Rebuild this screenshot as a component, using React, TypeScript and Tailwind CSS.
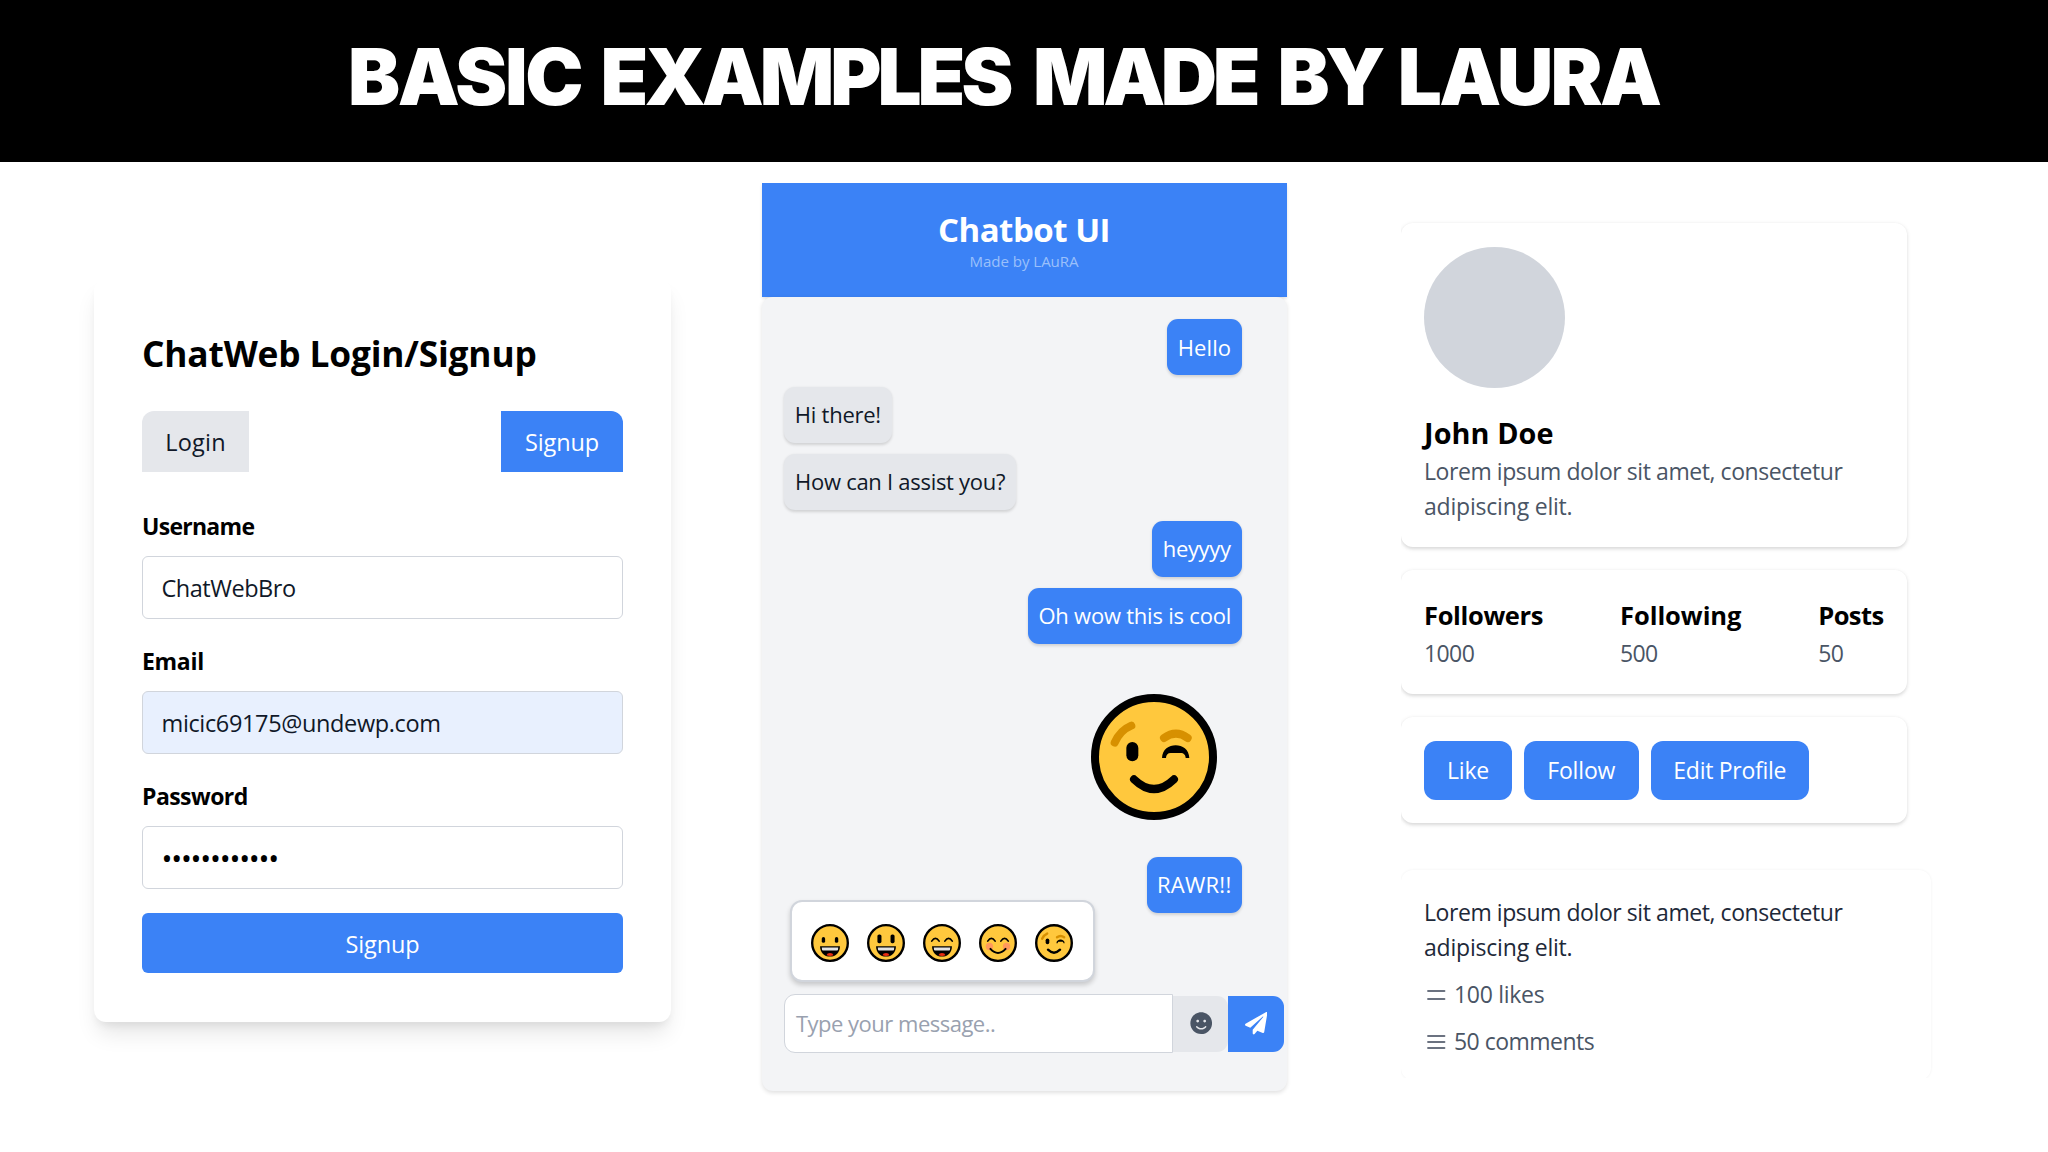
import type { ReactNode } from "react";
import { FaPaperPlane, FaSmile } from "react-icons/fa";

/* ---------- Emoji drawings ---------- */

function WinkEmoji({ className }: { className: string }) {
  return (
    <svg viewBox="32 42 378 378" className={className} fill="none" strokeLinecap="round">
      <circle cx="221" cy="231" r="177" fill="#ffc83d" stroke="#000" strokeWidth="24" />
      <path d="M103 188 Q119 151 153 137" stroke="#d79000" strokeWidth="24" />
      <path d="M251 174 Q287 148 322 174" stroke="#d79000" strokeWidth="24" />
      <rect x="138" y="186" width="36" height="58" rx="18" fill="#000" />
      <path
        d="M245 234 C246 208 266 196 286 196 C306 196 326 208 327 234 H316 C316 225 310 219 301 219 H271 C262 219 257 225 257 234 Z"
        fill="#000"
      />
      <path d="M161 298 Q221 356 281 298" stroke="#000" strokeWidth="24" />
    </svg>
  );
}

function Face({ children }: { children: ReactNode }) {
  return (
    <svg viewBox="0 0 113 113" className="size-[38px]" fill="none" strokeLinecap="round">
      <circle cx="56.5" cy="56.5" r="53" fill="#ffc83d" stroke="#000" strokeWidth="7" />
      {children}
    </svg>
  );
}

function OpenMouth() {
  return (
    <>
      <path d="M27 66 H86 C86 84 74 97 56.5 97 C39 97 27 84 27 66 Z" fill="#000" />
      <path d="M32 70 H81 Q81 79 78 79 H35 Q32 79 32 70 Z" fill="#e2e2e2" />
      <path d="M46 93 Q48 86 56.5 86 Q65 86 67 93 Q56.5 97 46 93 Z" fill="#e92c10" />
    </>
  );
}

function ArcEyes() {
  return (
    <>
      <path d="M26 51 Q37 34 48 51" stroke="#000" strokeWidth="5" />
      <path d="M65 51 Q76 34 87 51" stroke="#000" strokeWidth="5" />
    </>
  );
}

function EmojiPicker() {
  return (
    <div className="flex h-[82px] w-[305px] items-center justify-between rounded-[12px] border-2 border-gray-300 bg-white pr-[19.5px] pl-[19.5px] pt-[3px] shadow-[0_3px_5px_rgba(0,0,0,0.18)]">
      <Face>
        <rect x="32" y="39" width="10" height="17" rx="5" fill="#000" />
        <rect x="71" y="39" width="10" height="17" rx="5" fill="#000" />
        <OpenMouth />
      </Face>
      <Face>
        <rect x="31" y="31" width="12" height="26" rx="5" fill="#000" />
        <rect x="70" y="31" width="12" height="26" rx="5" fill="#000" />
        <OpenMouth />
      </Face>
      <Face>
        <ArcEyes />
        <OpenMouth />
      </Face>
      <Face>
        <circle cx="31" cy="67" r="11" fill="#ff8a65" opacity="0.75" />
        <circle cx="82" cy="67" r="11" fill="#ff8a65" opacity="0.75" />
        <ArcEyes />
        <path d="M34 74 Q56.5 98 79 74" stroke="#000" strokeWidth="6" />
      </Face>
      <WinkEmoji className="size-[38px]" />
    </div>
  );
}

/* ---------- Login / signup ---------- */

function Field({ label, tracking, children, tint }: { label: string; tracking: string; children: ReactNode; tint?: boolean }) {
  return (
    <div className="mb-6">
      <div className={"mb-3 text-[23px] font-bold leading-9 text-black " + tracking}>{label}</div>
      <div
        className={
          "flex h-[63px] items-center rounded-[6px] border-[1.5px] border-gray-300 pt-px pl-[18.5px] leading-9 text-gray-900 " +
          (tint ? "bg-[#e8f0fe]" : "bg-white")
        }
      >
        {children}
      </div>
    </div>
  );
}

function LoginCard() {
  return (
    <section className="mt-[117px] ml-[94px] h-[742.5px] w-[577px] shrink-0 rounded-[12px] bg-white p-12 text-[23.5px] shadow-[0_15px_22px_-4px_rgba(0,0,0,0.1),0_6px_9px_-3px_rgba(0,0,0,0.07)]">
      <h2 className="mb-[34px] pt-[2px] text-[35.3px] leading-[48px] font-bold tracking-[-0.17px] whitespace-nowrap text-black">
        ChatWeb Login/Signup
      </h2>
      <div className="mb-9 flex justify-between leading-9">
        <button className="h-[60.5px] w-[107px] rounded-tl-[12px] bg-gray-200 pt-[2px] tracking-[0.2px] text-gray-900">Login</button>
        <button className="h-[60.5px] w-[122px] rounded-tr-[12px] bg-[#3b82f6] pt-[2px] tracking-[-0.1px] text-white">Signup</button>
      </div>
      <Field label="Username" tracking="tracking-[-0.72px]">
        <span className="tracking-[-0.48px]">ChatWebBro</span>
      </Field>
      <Field label="Email" tracking="tracking-[-0.3px]" tint>
        <span className="tracking-[-0.36px]">micic69175@undewp.com</span>
      </Field>
      <Field label="Password" tracking="tracking-[-0.55px]">
        <span className="text-[29px] tracking-[-1.2px] text-black">••••••••••••</span>
      </Field>
      <button className="h-[60px] w-full rounded-[6px] bg-[#3b82f6] pt-[2px] leading-9 tracking-[-0.1px] text-white">Signup</button>
    </section>
  );
}

/* ---------- Chat ---------- */

function Bubble({ text, mine, size }: { text: string; mine?: boolean; size: string }) {
  return (
    <div
      className={
        "flex h-14 items-center justify-center rounded-[11px] whitespace-nowrap shadow-[0_1.5px_3px_rgba(0,0,0,0.14)] " +
        size +
        (mine ? " self-end bg-[#3b82f6] text-white" : " self-start bg-gray-200 text-gray-900")
      }
    >
      {text}
    </div>
  );
}

function ChatPanel() {
  return (
    <section className="mt-[21px] ml-[90.5px] flex w-[525px] shrink-0 flex-col text-[22px]">
      <header className="flex h-[114px] flex-col items-center bg-[#3b82f6] pt-[23.5px] shadow-[0_1.5px_3px_rgba(0,0,0,0.12)]">
        <h2 className="text-[33px] leading-[45px] font-bold tracking-[-0.5px] text-white">Chatbot UI</h2>
        <p className="-mt-[1.5px] text-[15.1px] leading-[22px] tracking-[-0.05px] text-[#9ac0fb]">Made by LAuRA</p>
      </header>
      <div className="relative h-[794px] rounded-[11px] bg-gray-100 pt-[22.4px] pr-[44.8px] pl-[22.4px] shadow-[0_1.5px_4px_rgba(0,0,0,0.12)]">
        <div className="flex flex-col gap-[11.2px] leading-[33.6px]">
          <Bubble mine text="Hello" size="w-[74.5px] tracking-[0.1px]" />
          <Bubble text="Hi there!" size="w-[108px] tracking-[-0.25px]" />
          <Bubble text="How can I assist you?" size="w-[232.5px] tracking-[-0.28px]" />
          <Bubble mine text="heyyyy" size="w-[90px] tracking-[-0.35px]" />
          <Bubble mine text="Oh wow this is cool" size="w-[214px] tracking-[-0.22px]" />
          <WinkEmoji className="mt-[39px] mr-[25px] mb-[25.3px] size-[126px] self-end" />
          <Bubble mine text="RAWR!!" size="w-[95px] tracking-[0.25px]" />
        </div>
        <div className="absolute top-[603px] left-[28px]">
          <EmojiPicker />
        </div>
        <div className="mt-[81.3px] -mr-[42px] flex items-center">
          <div className="flex h-[59px] w-[389px] items-center rounded-l-[11px] border-[1.5px] border-gray-300 bg-white pl-[11px] tracking-[-0.5px] text-gray-400">
            Type your message..
          </div>
          <button className="flex h-14 w-[55px] items-center justify-center rounded-r-[11px] bg-gray-200 pl-px">
            <FaSmile className="size-[22.4px] text-gray-600" />
          </button>
          <button className="flex h-14 w-14 items-center justify-center rounded-r-[11px] bg-[#3b82f6]">
            <FaPaperPlane className="size-[22.4px] text-white" />
          </button>
        </div>
      </div>
    </section>
  );
}

/* ---------- Profile ---------- */

const cardShadow = "shadow-[0_1.5px_4.5px_rgba(0,0,0,0.1),0_1.5px_3px_rgba(0,0,0,0.06)]";

function Stat({ label, value, tracking }: { label: string; value: string; tracking: string }) {
  return (
    <div>
      <div className={"text-[25.5px] leading-[41.2px] font-bold text-black " + tracking}>{label}</div>
      <div className="tracking-[-0.6px] text-gray-600">{value}</div>
    </div>
  );
}

function Lines({ ys }: { ys: number[] }) {
  return (
    <svg viewBox="0 0 24 24" className="mr-[6px] size-6" fill="none" stroke="#6b7280" strokeWidth="1.8" strokeLinecap="round">
      {ys.map((y) => (
        <path key={y} d={`M4 ${y}H20.5`} />
      ))}
    </svg>
  );
}

function ProfileColumn() {
  return (
    <section className="ml-[114px] flex h-[916px] w-[560px] flex-col overflow-hidden pt-[61px] text-[23px] leading-[35.3px]">
      <div className={"h-[323.5px] w-[506.5px] shrink-0 rounded-[12px] bg-white p-[23.5px] " + cardShadow}>
        <div className="mb-[24.7px] size-[141.3px] rounded-full bg-gray-300" />
        <h3 className="text-[28.8px] leading-[41.2px] font-bold tracking-[0.1px] text-black">John Doe</h3>
        <p className="tracking-[-0.43px] text-gray-600">
          Lorem ipsum dolor sit amet, consectetur
          <br />
          <span className="tracking-[-0.2px]">adipiscing elit.</span>
        </p>
      </div>
      <div className={"mt-[23.5px] flex h-[123.5px] w-[506.5px] shrink-0 justify-between rounded-[12px] bg-white px-[23.5px] pt-[24.5px] " + cardShadow}>
        <Stat label="Followers" value="1000" tracking="tracking-[-0.35px]" />
        <Stat label="Following" value="500" tracking="tracking-[-0.05px]" />
        <Stat label="Posts" value="50" tracking="tracking-[-0.6px]" />
      </div>
      <div className={"mt-[23.5px] flex h-[106px] w-[506.5px] shrink-0 gap-[12px] rounded-[12px] bg-white p-[23.5px] text-white " + cardShadow}>
        <button className="h-[59px] w-[88px] rounded-[12px] bg-[#3b82f6] pt-[2px] tracking-[-0.16px]">Like</button>
        <button className="h-[59px] w-[114.5px] rounded-[12px] bg-[#3b82f6] pt-[2px] tracking-[-0.16px]">Follow</button>
        <button className="h-[59px] w-[158.5px] rounded-[12px] bg-[#3b82f6] pt-[2px] tracking-[-0.28px]">Edit Profile</button>
      </div>
      <div className="mt-[47px] h-[210px] w-[530px] shrink-0 rounded-[12px] bg-white px-[23.5px] pt-[25px] shadow-[0_0_3px_rgba(0,0,0,0.06)]">
        <p className="tracking-[-0.43px] text-gray-800">
          Lorem ipsum dolor sit amet, consectetur
          <br />
          <span className="tracking-[-0.2px]">adipiscing elit.</span>
        </p>
        <div className="mt-[11.8px] flex items-center tracking-[-0.3px] text-gray-600">
          <Lines ys={[8, 16]} />
          100 likes
        </div>
        <div className="mt-[11.8px] flex items-center tracking-[-0.53px] text-gray-600">
          <Lines ys={[6, 12, 18]} />
          50 comments
        </div>
      </div>
    </section>
  );
}

export default function App() {
  return (
    <div className="h-[1152px] w-[2048px] overflow-hidden bg-white font-['Open_Sans',sans-serif]">
      <header className="flex h-[162px] bg-black pt-[28.5px] pl-[348px]">
        <h1 className="font-['Inter',sans-serif] text-[78px] leading-[96px] font-black tracking-[-2.3px] whitespace-nowrap text-white">
          <span>BASIC</span> <span className="ml-[6px] tracking-[-4px]">EXAMPLES</span>{" "}
          <span className="ml-[10.5px] tracking-[-4.4px]">MADE</span> <span className="ml-[8px] tracking-[-4.5px]">BY</span>{" "}
          <span className="ml-[3.5px] tracking-[-2.7px]">LAURA</span>
        </h1>
      </header>
      <main className="flex h-[990px] items-start">
        <LoginCard />
        <ChatPanel />
        <ProfileColumn />
      </main>
    </div>
  );
}
